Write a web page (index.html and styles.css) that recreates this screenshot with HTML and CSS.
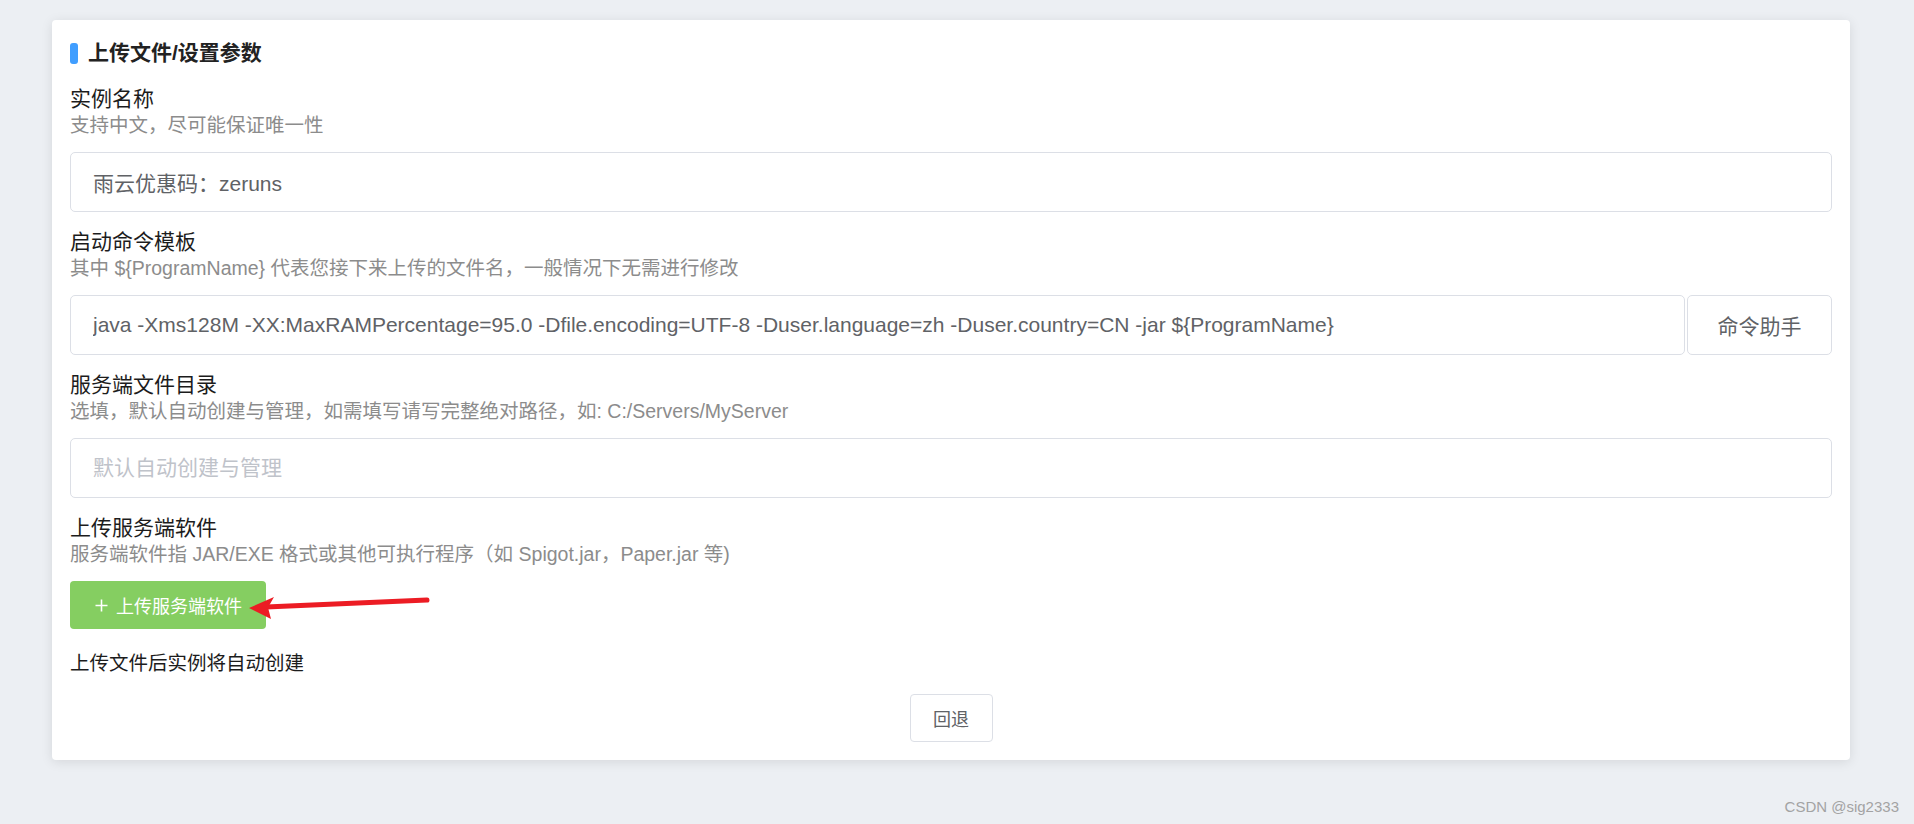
FILE: index.html
```html
<!DOCTYPE html>
<html lang="zh-CN">
<head>
  <meta charset="UTF-8" />
  <meta name="viewport" content="width=device-width, initial-scale=1.0"/>
  <title>上传文件/设置参数</title>
  <link rel="stylesheet" href="styles.css">
</head>
<body>

  <div class="page">
    <div class="card">
      <div class="card-title"><span class="title-bar"></span>上传文件/设置参数</div>

      <div class="field">
        <div class="field-label">实例名称</div>
        <div class="field-desc">支持中文，尽可能保证唯一性</div>
        <input class="input" type="text" value="雨云优惠码：zeruns">
      </div>

      <div class="field">
        <div class="field-label">启动命令模板</div>
        <div class="field-desc">其中 ${ProgramName} 代表您接下来上传的文件名，一般情况下无需进行修改</div>
        <div class="input-group">
          <input class="input" type="text" value="java -Xms128M -XX:MaxRAMPercentage=95.0 -Dfile.encoding=UTF-8 -Duser.language=zh -Duser.country=CN -jar ${ProgramName}">
          <button class="btn btn-append">命令助手</button>
        </div>
      </div>

      <div class="field">
        <div class="field-label">服务端文件目录</div>
        <div class="field-desc">选填，默认自动创建与管理，如需填写请写完整绝对路径，如: C:/Servers/MyServer</div>
        <input class="input" type="text" placeholder="默认自动创建与管理">
      </div>

      <div class="field">
        <div class="field-label">上传服务端软件</div>
        <div class="field-desc">服务端软件指 JAR/EXE 格式或其他可执行程序（如 Spigot.jar，Paper.jar 等)</div>
        <div class="upload-row">
          <button class="btn btn-success">
            <svg class="plus" width="13" height="13" viewBox="0 0 13 13"><path d="M6.5 0.5v12M0.5 6.5h12" stroke="#fff" stroke-width="1.6" fill="none"/></svg>
            上传服务端软件
          </button>
          <!-- annotation arrow drawn over the screenshot -->
          <svg class="arrow" width="186" height="28" viewBox="0 0 186 28">
            <path d="M20 13 L181 6" stroke="#ec1c24" stroke-width="5" stroke-linecap="round" fill="none"/>
            <path d="M3 14 L28 3 L22 13.5 L25 25 Z" fill="#ec1c24"/>
          </svg>
        </div>
      </div>

      <div class="note">上传文件后实例将自动创建</div>

      <div class="actions">
        <button class="btn btn-default">回退</button>
      </div>
    </div>
  </div>

  <div class="watermark">CSDN @sig2333</div>

</body>
</html>
```

FILE: styles.css
```css
body {
  margin: 0;
  font-family: "Liberation Sans", "Noto Sans CJK SC", sans-serif;
  background-color: #eceff3;
  height: 824px;
  overflow: hidden;
}

.page {
  padding: 20px 64px 0 52px;
}

.card {
  background: #fff;
  border-radius: 4px;
  box-shadow: 0 2px 12px 0 rgba(0, 0, 0, 0.1);
  padding: 18px;
}

.card-title {
  display: flex;
  align-items: center;
  font-size: 21px;
  font-weight: bold;
  line-height: 30px;
  color: #222;
  margin-bottom: 18px;
}

.title-bar {
  width: 8px;
  height: 21px;
  border-radius: 3px;
  background-color: #409eff;
  margin-right: 10px;
}

.field {
  margin-bottom: 17px;
}

.field-label {
  font-size: 21px;
  line-height: 26px;
  color: #1c1c1c;
}

.field-desc {
  font-size: 19.5px;
  line-height: 26px;
  color: #8c8c8c;
}

.input {
  display: block;
  width: 100%;
  box-sizing: border-box;
  height: 60px;
  margin-top: 14px;
  padding: 0 22px;
  border: 1px solid #dcdfe6;
  border-radius: 5px;
  font-family: inherit;
  font-size: 21px;
  color: #606266;
  outline: none;
}

.input::placeholder {
  color: #bfc3ca;
}

.input-group {
  display: flex;
  margin-top: 14px;
}

.input-group .input {
  flex: 1;
  margin-top: 0;
}

.btn {
  font-family: inherit;
  cursor: pointer;
  box-sizing: border-box;
}

.btn-append {
  width: 145px;
  height: 60px;
  margin-left: 2px;
  background: #fff;
  border: 1px solid #dcdfe6;
  border-radius: 5px;
  font-size: 21px;
  color: #606266;
}

.upload-row {
  position: relative;
  margin-top: 14px;
  height: 48px;
}

.btn-success {
  display: flex;
  align-items: center;
  gap: 8px;
  height: 48px;
  width: 196px;
  padding: 0 0 0 25px;
  border: none;
  border-radius: 4px;
  background-color: #85ce61;
  color: #fff;
  font-size: 18px;
}

.arrow {
  position: absolute;
  left: 176px;
  top: 13px;
}

.note {
  font-size: 19.5px;
  line-height: 26px;
  color: #1c1c1c;
  margin-top: 21px;
}

.actions {
  display: flex;
  justify-content: center;
  margin-top: 18px;
}

.btn-default {
  width: 83px;
  height: 48px;
  background: #fff;
  border: 1px solid #dcdfe6;
  border-radius: 4px;
  font-size: 18px;
  color: #606266;
}

.watermark {
  position: absolute;
  right: 15px;
  bottom: 9px;
  font-size: 15px;
  color: #a3a3a3;
}
```
